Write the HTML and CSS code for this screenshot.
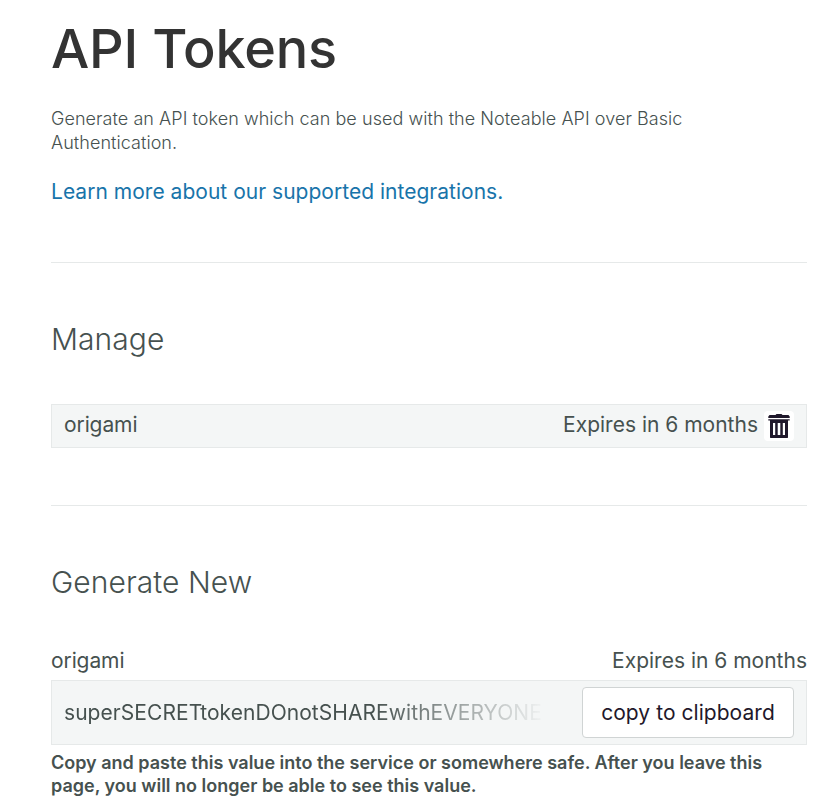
FILE: index.html
```html
<!DOCTYPE html>
<html lang="en">
<head>
<meta charset="utf-8">
<title>API Tokens</title>
<link rel="stylesheet" href="styles.css">
</head>
<body>
<main class="page">
  <header class="intro">
    <h1>API Tokens</h1>
    <p class="description">Generate an API token which can be used with the Noteable API over Basic<br>Authentication.</p>
    <a class="learn" href="#">Learn more about our supported integrations.</a>
  </header>
  <section class="manage">
    <h2>Manage</h2>
    <div class="token-row">
      <span class="name">origami</span>
      <span class="expiry">Expires in 6 months</span>
      <button class="delete" aria-label="Delete token">
        <svg width="30" height="30" viewBox="0 0 30 30"><path fill="#1f182b" fill-rule="evenodd" d="M11.500 4 12.500 3h5L18.500 4H24.500L25.700 5.500V7H4.300V5.500L5.500 4zM4.300 8.300H25.700V9.500H24V26.500L23.500 27H6.500L6 26.500V9.500H4.300zM9 12v12h2.200V12zM13.700 12v12h2.600V12zM18.800 12v12H21V12z"/></svg>
      </button>
    </div>
  </section>
  <section class="generate">
    <h2>Generate New</h2>
    <div class="token-meta"><span class="name">origami</span><span class="expiry">Expires in 6 months</span></div>
    <div class="secret-row">
      <span class="secret">superSECRETtokenDOnotSHAREwithEVERYONE</span>
      <button class="copy">copy to clipboard</button>
    </div>
    <p class="warning">Copy and paste this value into the service or somewhere safe. After you leave this<br>page, you will no longer be able to see this value.</p>
  </section>
</main>
</body>
</html>
```
FILE: styles.css
```css
* { box-sizing: border-box; }
body { margin: 0; background: #fff; color: #46514f; font-family: Inter, sans-serif; overflow: hidden; }
.page { width: 756px; margin-left: 51px; }
h1, h2, p { margin: 0; white-space: nowrap; }
.intro { height: 263px; padding-top: 16px; border-bottom: 1px solid #e6e9e9; }
h1 { font-size: 54px; line-height: 66px; font-weight: 500; letter-spacing: -0.2px; color: #333; }
.description { margin-top: 25px; font-size: 18px; line-height: 24px; font-weight: 300; letter-spacing: 0.055px; }
.learn { display: block; margin-top: 24px; font-size: 21px; line-height: 26px; letter-spacing: 0.02px; color: #1874aa; text-decoration: none; white-space: nowrap; }
.manage { height: 243px; padding-top: 56px; border-bottom: 1px solid #e6e9e9; }
h2 { font-size: 30px; line-height: 40px; font-weight: 300; letter-spacing: 0.05px; }
.name, .expiry, .secret { font-size: 21px; line-height: 26px; white-space: nowrap; }
.name { letter-spacing: -0.1px; }
.token-row { display: flex; align-items: center; height: 44px; margin-top: 45px; padding: 0 12px; background: #f4f6f6; border: 1px solid #e6e9e9; }
.token-row .name, .token-row .expiry { margin-bottom: 2px; }
.expiry { margin-left: auto; }
.delete { display: flex; align-items: center; justify-content: center; width: 30px; height: 30px; margin-left: 6px; padding: 0; border: 0; border-radius: 4px; background: #fff; }
.generate { padding-top: 56px; }
.token-meta { display: flex; margin-top: 46px; height: 32px; }
.secret-row { display: flex; align-items: center; justify-content: space-between; height: 65px; padding: 0 12px; background: #f4f6f6; border: 1px solid #e6e9e9; }
.secret { width: 482px; overflow: hidden; letter-spacing: 0.06px; -webkit-mask-image: linear-gradient(90deg, #000 64%, transparent); mask-image: linear-gradient(90deg, #000 64%, transparent); }
.copy { width: 212px; height: 51px; padding: 0; border: 1px solid #d0d4d4; border-radius: 4px; background: #fff; color: #1f182b; font: 400 21px Inter, sans-serif; letter-spacing: 0.05px; }
.warning { margin-top: 6px; font-size: 18px; line-height: 23px; font-weight: 600; }
```
